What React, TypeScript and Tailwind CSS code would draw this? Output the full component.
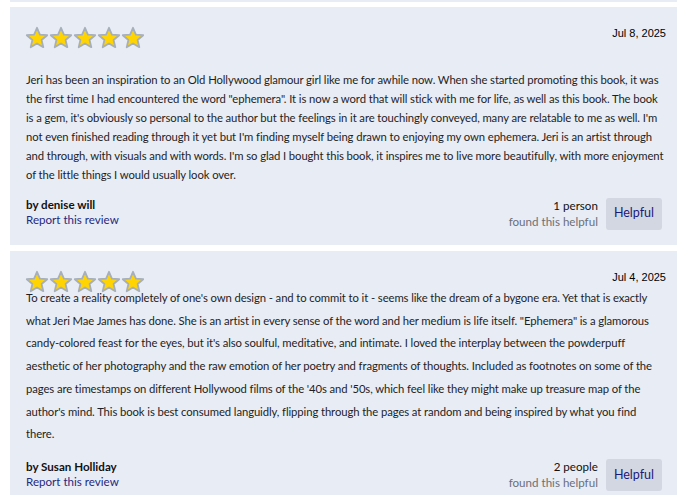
import React from "react";

type Review = {
    date: string;
    author: string;
    helpful: string;
    text: string;
    bodyClass: string;
};

const reviews: Review[] = [
    {
        date: "Jul 8, 2025",
        author: "denise will",
        helpful: "1 person",
        bodyClass: "mt-[20px] leading-[19px]",
        text: "Jeri has been an inspiration to an Old Hollywood glamour girl like me for awhile now. When she started promoting this book, it was the first time I had encountered the word \"ephemera\". It is now a word that will stick with me for life, as well as this book. The book is a gem, it's obviously so personal to the author but the feelings in it are touchingly conveyed, many are relatable to me as well. I'm not even finished reading through it yet but I'm finding myself being drawn to enjoying my own ephemera. Jeri is an artist through and through, with visuals and with words. I'm so glad I bought this book, it inspires me to live more beautifully, with more enjoyment of the little things I would usually look over.",
    },
    {
        date: "Jul 4, 2025",
        author: "Susan Holliday",
        helpful: "2 people",
        bodyClass: "mt-[-7px] leading-[22.7px]",
        text: "To create a reality completely of one's own design - and to commit to it - seems like the dream of a bygone era. Yet that is exactly what Jeri Mae James has done. She is an artist in every sense of the word and her medium is life itself. \"Ephemera\" is a glamorous candy-colored feast for the eyes, but it's also soulful, meditative, and intimate. I loved the interplay between the powderpuff aesthetic of her photography and the raw emotion of her poetry and fragments of thoughts. Included as footnotes on some of the pages are timestamps on different Hollywood films of the '40s and '50s, which feel like they might make up treasure map of the author's mind. This book is best consumed languidly, flipping through the pages at random and being inspired by what you find there.",
    },
];

function Star() {
    return (
        <svg width="24" height="24" viewBox="0 0 24 24">
            <polygon
                points="12,1.8 14.9,8.6 22.2,9.2 16.6,14 18.3,21.2 12,17.4 5.7,21.2 7.4,14 1.8,9.2 9.1,8.6"
                fill="#ffd400"
                stroke="#a7afb9"
                strokeWidth="1.8"
                strokeLinejoin="round"
            />
        </svg>
    );
}

function ReviewCard({ review }: { review: Review }) {
    return (
        <div className="ml-[10px] bg-[#e8ecf5] pl-4 pr-[11px] pt-[19px] pb-[15px]">
            {/* Header */}
            <div className="flex justify-between items-start">
                <div className="flex -ml-[1px]">
                    {[0, 1, 2, 3, 4].map((i) => (
                        <Star key={i} />
                    ))}
                </div>
                <span className="text-[11px] leading-[14px] text-black" style={{ fontFamily: "'Liberation Sans', Arial, sans-serif" }}>
                    {review.date}
                </span>
            </div>

            {/* Body */}
            <p className={`text-[11.3px] text-[#1e1e24] tracking-[-0.1px] ${review.bodyClass}`}>
                {review.text}
            </p>

            {/* Footer */}
            <div className="flex justify-between items-center mt-[13px] pr-[4px]">
                <div className="flex flex-col text-[11.6px] leading-[15px] mb-[3px]">
                    <span className="font-bold text-[#111]">by {review.author}</span>
                    <span className="text-[#1f2a80]">Report this review</span>
                </div>
                <div className="flex items-center gap-[8px]">
                    <div className="flex flex-col items-end text-[11.6px] leading-[16px]">
                        <span className="text-[#111]">{review.helpful}</span>
                        <span className="text-[#6b6f78]">found this helpful</span>
                    </div>
                    <button className="h-[32px] px-[8px] rounded-[3px] bg-[#d3d7e1] text-[#1a1a7a] text-[12.5px]">
                        Helpful
                    </button>
                </div>
            </div>
        </div>
    );
}

export default function App() {
    return (
        <div className="w-[677px] h-[495px] overflow-hidden bg-white" style={{ fontFamily: "Lato, 'Noto Sans', sans-serif" }}>
            <div className="ml-[10px] h-[2px] bg-[#e8ecf5]" />
            <div className="flex flex-col gap-[6px] mt-[5px]">
                {reviews.map((r) => (
                    <ReviewCard key={r.author} review={r} />
                ))}
            </div>
        </div>
    );
}
